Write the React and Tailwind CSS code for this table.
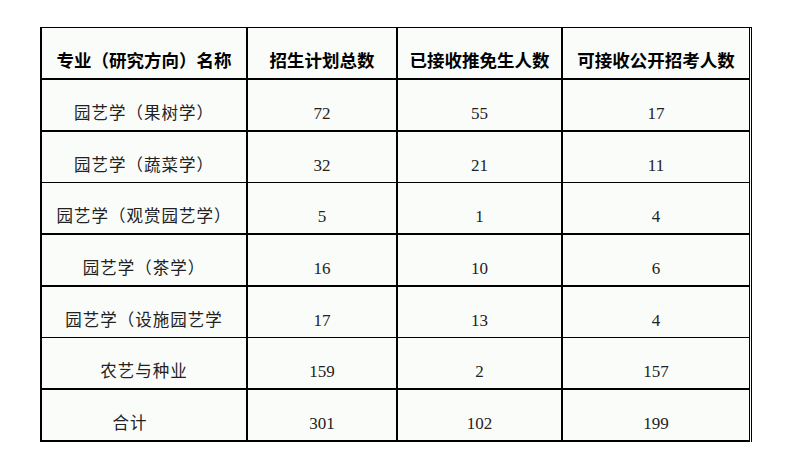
const rows = [
  { name: "园艺学（果树学）", plan: "72", exempt: "55", open: "17", line: "border-b-2" },
  { name: "园艺学（蔬菜学）", plan: "32", exempt: "21", open: "11", line: "border-b" },
  { name: "园艺学（观赏园艺学）", plan: "5", exempt: "1", open: "4", line: "border-b-2" },
  { name: "园艺学（茶学）", plan: "16", exempt: "10", open: "6", line: "border-b-2" },
  { name: "园艺学（设施园艺学", plan: "17", exempt: "13", open: "4", line: "border-b" },
  { name: "农艺与种业", plan: "159", exempt: "2", open: "157", line: "border-b-2" },
  { name: "合计", plan: "301", exempt: "102", open: "199", line: "border-b-2", shift: true },
];

const font = { fontFamily: '"Liberation Serif", "Noto Sans CJK SC", serif' };

function Cell({ width, last, children, className = "" }) {
  return (
    <div
      className={`${width} h-[50px] flex items-end justify-center pb-[8px] leading-none ${
        last ? "" : "border-r-2 border-black"
      } ${className}`}
    >
      {children}
    </div>
  );
}

export default function App() {
  return (
    <div className="w-[798px] h-[471px] bg-white pt-[27px] pl-[40px]" style={font}>
      <div className="w-[712px] border-t border-l-2 border-r-[3px] border-double border-black bg-[#fafcfa]">
        {/* header */}
        <div className="flex border-b-2 border-solid border-black text-[17.5px] font-bold text-black">
          <Cell width="w-[206px]" className="pb-[6px]">专业（研究方向）名称</Cell>
          <Cell width="w-[150px]" className="pb-[6px]">招生计划总数</Cell>
          <Cell width="w-[165px]" className="pb-[6px]">已接收推免生人数</Cell>
          <Cell width="w-[186px]" last className="pb-[6px]">可接收公开招考人数</Cell>
        </div>
        {rows.map((r) => (
          <div
            key={r.name}
            className={`flex ${r.line} border-solid border-black text-[16.5px] text-[#222]`}
          >
            <Cell
              width="w-[206px]"
              className={`tracking-[1px] ${r.shift ? "pr-[28px]" : ""}`}
            >
              {r.name}
            </Cell>
            <Cell width="w-[150px]" className="text-[17px]">{r.plan}</Cell>
            <Cell width="w-[165px]" className="text-[17px]">{r.exempt}</Cell>
            <Cell width="w-[186px]" last className="text-[17px]">{r.open}</Cell>
          </div>
        ))}
      </div>
    </div>
  );
}
